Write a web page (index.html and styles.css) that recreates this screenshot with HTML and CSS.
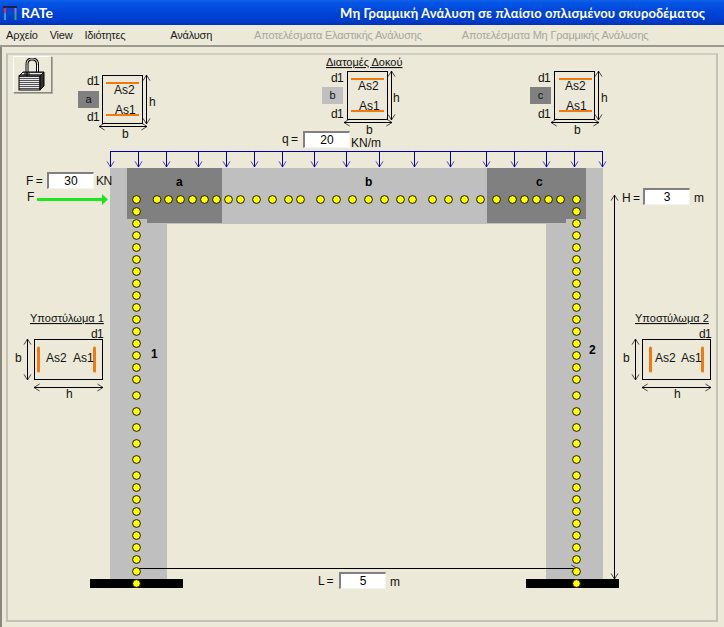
FILE: index.html
```html
<!DOCTYPE html>
<html lang="el">
<head>
<meta charset="utf-8">
<title>RATe</title>
<link rel="stylesheet" href="styles.css">
</head>
<body>
<div class="window">
  <header class="titlebar">
    <svg class="app-icon" width="16" height="16" viewBox="0 0 16 16">
      <path d="M1 2H15" stroke="#20204a" stroke-width="2"/>
      <path d="M3 3V8" stroke="#d33" stroke-width="2"/>
      <path d="M3 8V15" stroke="#2ab" stroke-width="2"/>
      <path d="M13.500 3V8" stroke="#b6a" stroke-width="2"/>
      <path d="M13.500 8V15" stroke="#3a6" stroke-width="2"/>
    </svg>
    <span class="app-name">RATe</span>
    <span class="app-title">Μη Γραμμική Ανάλυση σε πλαίσιο οπλισμένου σκυροδέματος</span>
  </header>
  <nav class="menubar">
    <span class="menu">Αρχείο</span>
    <span class="menu m2">View</span>
    <span class="menu m3">Ιδιότητες</span>
    <span class="menu m4">Ανάλυση</span>
    <span class="menu off m5">Αποτελέσματα Ελαστικής Ανάλυσης</span>
    <span class="menu off m6">Αποτελέσματα Μη Γραμμικής Ανάλυσης</span>
  </nav>
  <main class="client">
    <div class="panel"></div>
    <div class="stage">
    <svg class="drawing" width="724" height="627" viewBox="0 0 724 627">
      <defs>
        <marker id="ah" viewBox="0 0 10 10" refX="9" refY="5" markerWidth="7" markerHeight="10" orient="auto-start-reverse" markerUnits="userSpaceOnUse">
          <path d="M1 0L9 5L1 10" fill="none" stroke="#000" stroke-width="1"/>
        </marker>
        <marker id="ab" viewBox="0 0 10 10" refX="9" refY="5" markerWidth="7" markerHeight="11" orient="auto" markerUnits="userSpaceOnUse">
          <path d="M1 0L9 5L1 10" fill="none" stroke="#0000b0" stroke-width="1"/>
        </marker>
      </defs>

      <!-- frame -->
      <path class="concrete" d="M110 168H603V579H546V224H167V579H110Z"/>
      <path class="dark" d="M127 168H222V223H147V219H127Z"/>
      <path class="dark" d="M487 168H586V219H566V223H487Z"/>
      <rect x="90" y="579" width="93" height="9"/>
      <rect x="526" y="579" width="93" height="9"/>

      <!-- distributed load -->
      <path class="load" d="M110.500 151.500H602.500"/>
      <g class="load">
        <path marker-end="url(#ab)" d="M110.500 151V167"/>
        <path marker-end="url(#ab)" d="M138.500 151V167"/>
        <path marker-end="url(#ab)" d="M166.500 151V167"/>
        <path marker-end="url(#ab)" d="M198.500 151V167"/>
        <path marker-end="url(#ab)" d="M226.500 151V167"/>
        <path marker-end="url(#ab)" d="M254.500 151V167"/>
        <path marker-end="url(#ab)" d="M282.500 151V167"/>
        <path marker-end="url(#ab)" d="M314.500 151V167"/>
        <path marker-end="url(#ab)" d="M346.500 151V167"/>
        <path marker-end="url(#ab)" d="M379.500 151V167"/>
        <path marker-end="url(#ab)" d="M414.500 151V167"/>
        <path marker-end="url(#ab)" d="M450.500 151V167"/>
        <path marker-end="url(#ab)" d="M486.500 151V167"/>
        <path marker-end="url(#ab)" d="M514.500 151V167"/>
        <path marker-end="url(#ab)" d="M546.500 151V167"/>
        <path marker-end="url(#ab)" d="M574.500 151V167"/>
        <path marker-end="url(#ab)" d="M602.500 151V167"/>
      </g>

      <!-- force -->
      <path class="force" d="M37 199.500H104"/>
      <path class="force-head" d="M102 194L108 199.500L102 205Z"/>

      <!-- dimension lines -->
      <path class="dim" marker-end="url(#ah)" d="M136 568.500H577"/>
      <path class="dim" marker-start="url(#ah)" marker-end="url(#ah)" d="M614.500 195V579"/>

      <!-- section a -->
      <rect class="tag-dark" x="78" y="91" width="21" height="17"/>
      <rect class="sec" x="102.500" y="75.500" width="40" height="48"/>
      <path class="bar" d="M106 83H139M106 115H139"/>
      <path class="dim" marker-start="url(#ah)" marker-end="url(#ah)" d="M146.500 75V124"/>
      <path class="dim" marker-start="url(#ah)" marker-end="url(#ah)" d="M99 126.500H147"/>

      <!-- section b -->
      <rect class="tag-light" x="322" y="87" width="21" height="17"/>
      <rect class="sec" x="347.500" y="71.500" width="40" height="48"/>
      <path class="bar" d="M351 79H384M351 111H384"/>
      <path class="dim" marker-start="url(#ah)" marker-end="url(#ah)" d="M391.500 71V120"/>
      <path class="dim" marker-start="url(#ah)" marker-end="url(#ah)" d="M344 122.500H392"/>

      <!-- section c -->
      <rect class="tag-dark" x="530" y="87" width="21" height="17"/>
      <rect class="sec" x="554.500" y="71.500" width="40" height="48"/>
      <path class="bar" d="M559 79H592M559 111H592"/>
      <path class="dim" marker-start="url(#ah)" marker-end="url(#ah)" d="M598.500 71V120"/>
      <path class="dim" marker-start="url(#ah)" marker-end="url(#ah)" d="M551 122.500H599"/>

      <!-- column 1 section -->
      <rect class="sec" x="34.500" y="339.500" width="68" height="40"/>
      <path class="bar-col" d="M38.500 348V371M94.500 348V371"/>
      <path class="dim" marker-start="url(#ah)" marker-end="url(#ah)" d="M27.500 339V380"/>
      <path class="dim" marker-start="url(#ah)" marker-end="url(#ah)" d="M34 387.500H103"/>

      <!-- column 2 section -->
      <rect class="sec" x="642.500" y="339.500" width="68" height="40"/>
      <path class="bar-col" d="M650.500 348V371M702.500 348V371"/>
      <path class="dim" marker-start="url(#ah)" marker-end="url(#ah)" d="M635.500 339V380"/>
      <path class="dim" marker-start="url(#ah)" marker-end="url(#ah)" d="M642 387.500H711"/>

      <!-- reinforcement dots -->
      <g class="dots">
        <circle cx="136.500" cy="199.500" r="3.900"/><circle cx="157" cy="199.500" r="3.900"/><circle cx="168.500" cy="199.500" r="3.900"/><circle cx="180.500" cy="199.500" r="3.900"/><circle cx="192.500" cy="199.500" r="3.900"/><circle cx="204.500" cy="199.500" r="3.900"/><circle cx="216.500" cy="199.500" r="3.900"/><circle cx="228.500" cy="199.500" r="3.900"/><circle cx="240.500" cy="199.500" r="3.900"/><circle cx="256.500" cy="199.500" r="3.900"/><circle cx="272.500" cy="199.500" r="3.900"/><circle cx="288.500" cy="199.500" r="3.900"/><circle cx="300.500" cy="199.500" r="3.900"/><circle cx="320.500" cy="199.500" r="3.900"/><circle cx="336.500" cy="199.500" r="3.900"/><circle cx="352.500" cy="199.500" r="3.900"/><circle cx="368.500" cy="199.500" r="3.900"/><circle cx="384.500" cy="199.500" r="3.900"/><circle cx="400.500" cy="199.500" r="3.900"/><circle cx="412.500" cy="199.500" r="3.900"/><circle cx="432.500" cy="199.500" r="3.900"/><circle cx="448.500" cy="199.500" r="3.900"/><circle cx="464.500" cy="199.500" r="3.900"/><circle cx="480.500" cy="199.500" r="3.900"/><circle cx="496.500" cy="199.500" r="3.900"/><circle cx="512.500" cy="199.500" r="3.900"/><circle cx="524.500" cy="199.500" r="3.900"/><circle cx="536.500" cy="199.500" r="3.900"/><circle cx="548.500" cy="199.500" r="3.900"/><circle cx="560.500" cy="199.500" r="3.900"/><circle cx="576.500" cy="199.500" r="3.900"/>
        <circle cx="136.500" cy="211.500" r="3.900"/><circle cx="136.500" cy="223.500" r="3.900"/><circle cx="136.500" cy="235.500" r="3.900"/><circle cx="136.500" cy="247.500" r="3.900"/><circle cx="136.500" cy="259.500" r="3.900"/><circle cx="136.500" cy="271.500" r="3.900"/><circle cx="136.500" cy="283.500" r="3.900"/><circle cx="136.500" cy="295.500" r="3.900"/><circle cx="136.500" cy="307.500" r="3.900"/><circle cx="136.500" cy="319.500" r="3.900"/><circle cx="136.500" cy="331.500" r="3.900"/><circle cx="136.500" cy="343.500" r="3.900"/><circle cx="136.500" cy="355.500" r="3.900"/><circle cx="136.500" cy="367.500" r="3.900"/><circle cx="136.500" cy="379.500" r="3.900"/><circle cx="136.500" cy="395.500" r="3.900"/><circle cx="136.500" cy="411.500" r="3.900"/><circle cx="136.500" cy="427.500" r="3.900"/><circle cx="136.500" cy="443.500" r="3.900"/><circle cx="136.500" cy="459.500" r="3.900"/><circle cx="136.500" cy="475.500" r="3.900"/><circle cx="136.500" cy="487.500" r="3.900"/><circle cx="136.500" cy="499.500" r="3.900"/><circle cx="136.500" cy="511.500" r="3.900"/><circle cx="136.500" cy="523.500" r="3.900"/><circle cx="136.500" cy="535.500" r="3.900"/><circle cx="136.500" cy="547.500" r="3.900"/><circle cx="136.500" cy="559.500" r="3.900"/><circle cx="136.500" cy="571.500" r="3.900"/>
        <circle cx="576.500" cy="211.500" r="3.900"/><circle cx="576.500" cy="223.500" r="3.900"/><circle cx="576.500" cy="235.500" r="3.900"/><circle cx="576.500" cy="247.500" r="3.900"/><circle cx="576.500" cy="259.500" r="3.900"/><circle cx="576.500" cy="271.500" r="3.900"/><circle cx="576.500" cy="283.500" r="3.900"/><circle cx="576.500" cy="295.500" r="3.900"/><circle cx="576.500" cy="307.500" r="3.900"/><circle cx="576.500" cy="319.500" r="3.900"/><circle cx="576.500" cy="331.500" r="3.900"/><circle cx="576.500" cy="343.500" r="3.900"/><circle cx="576.500" cy="355.500" r="3.900"/><circle cx="576.500" cy="367.500" r="3.900"/><circle cx="576.500" cy="379.500" r="3.900"/><circle cx="576.500" cy="395.500" r="3.900"/><circle cx="576.500" cy="411.500" r="3.900"/><circle cx="576.500" cy="427.500" r="3.900"/><circle cx="576.500" cy="443.500" r="3.900"/><circle cx="576.500" cy="459.500" r="3.900"/><circle cx="576.500" cy="475.500" r="3.900"/><circle cx="576.500" cy="487.500" r="3.900"/><circle cx="576.500" cy="499.500" r="3.900"/><circle cx="576.500" cy="511.500" r="3.900"/><circle cx="576.500" cy="523.500" r="3.900"/><circle cx="576.500" cy="535.500" r="3.900"/><circle cx="576.500" cy="547.500" r="3.900"/><circle cx="576.500" cy="559.500" r="3.900"/><circle cx="576.500" cy="571.500" r="3.900"/>
        <circle cx="136.500" cy="583.500" r="3.900"/><circle cx="576.500" cy="583.500" r="3.900"/>
      </g>

      <!-- labels -->
      <g class="labels">
        <text class="heading" x="326" y="66">Διατομές Δοκού</text>
        <text class="heading" x="30" y="322">Υποστύλωμα 1</text>
        <text class="heading" x="635" y="322">Υποστύλωμα 2</text>

        <text class="small" x="88.500" y="103">a</text>
        <text class="small" x="332.500" y="99">b</text>
        <text class="small" x="540.500" y="99">c</text>

        <text class="tight" x="87" y="85">d1</text>
        <text class="tight" x="87" y="121">d1</text>
        <text x="114" y="94">As2</text>
        <text x="115" y="114">As1</text>
        <text x="149" y="106">h</text>
        <text x="122" y="138">b</text>

        <text class="tight" x="331" y="82">d1</text>
        <text class="tight" x="331" y="118">d1</text>
        <text x="358" y="90">As2</text>
        <text x="359" y="110">As1</text>
        <text x="393" y="102">h</text>
        <text x="366" y="134">b</text>

        <text class="tight" x="538" y="82">d1</text>
        <text class="tight" x="538" y="118">d1</text>
        <text x="565" y="90">As2</text>
        <text x="566" y="110">As1</text>
        <text x="601" y="102">h</text>
        <text x="574" y="134">b</text>

        <text class="tight" x="91" y="338">d1</text>
        <text x="46" y="362">As2</text>
        <text x="73" y="362">As1</text>
        <text x="15" y="362">b</text>
        <text x="66" y="398">h</text>

        <text class="tight" x="699" y="338">d1</text>
        <text x="655" y="362">As2</text>
        <text x="681" y="362">As1</text>
        <text x="623" y="362">b</text>
        <text x="674" y="398">h</text>

        <text class="eq" x="282" y="143">q =</text>
        <text x="351" y="147">KN/m</text>
        <text class="eq" x="26" y="185">F =</text>
        <text class="tight" x="96" y="185">KN</text>
        <text x="27" y="201">F</text>
        <text class="eq" x="622" y="202">H =</text>
        <text x="694" y="202">m</text>
        <text class="eq" x="318" y="585">L =</text>
        <text x="390" y="586">m</text>

        <text class="mark" x="176" y="186">a</text>
        <text class="mark" x="365" y="186">b</text>
        <text class="mark" x="536" y="186">c</text>
        <text class="mark" x="151" y="358">1</text>
        <text class="mark" x="589" y="354">2</text>
      </g>
    </svg>

    <button class="lock" type="button" aria-label="lock">
      <svg width="28" height="33" viewBox="0 0 28 33">
        <defs>
          <pattern id="mesh" width="2" height="2" patternUnits="userSpaceOnUse">
            <rect width="2" height="2" fill="#e8e8e8"/>
            <rect width="2" height="1" fill="#555"/>
          </pattern>
        </defs>
        <path d="M9 15V6.500C9 2.500 10.500 1 14 1S19.500 2.500 19.500 6.500V15" fill="none" stroke="#000" stroke-width="3"/>
        <path d="M9 15V6.500C9 2.500 10.500 1 14 1S19.500 2.500 19.500 6.500V15" fill="none" stroke="#fff" stroke-width="1"/>
        <path d="M1 18L5 14H26L22 18Z" fill="url(#mesh)" stroke="#000"/>
        <rect x="1" y="18" width="21" height="14" fill="url(#mesh)" stroke="#000"/>
        <path d="M22 18L26 14V28L22 32Z" fill="#333" stroke="#000"/>
        <path d="M6 16H12M9 14V18" stroke="#000"/>
      </svg>
    </button>

    <span class="field f-q">20</span>
    <span class="field f-f">30</span>
    <span class="field f-h">3</span>
    <span class="field f-l">5</span>
    </div>
  </main>
</div>
</body>
</html>
```

FILE: styles.css
```css
* { box-sizing: border-box; }
html, body { margin: 0; padding: 0; background: #ece9d8; }
body { font-family: "Liberation Sans", Arial, sans-serif; color: #000; overflow: hidden; }
.window { width: 724px; height: 627px; display: flex; flex-direction: column; background: #ece9d8; }

.titlebar {
  height: 25px; flex: none; display: flex; align-items: center; padding: 0 19px 0 2px;
  background: linear-gradient(180deg, #0f62e8 0, #0454e4 3px, #0045d8 12px, #003ccc 20px, #0034b4 25px);
  color: #fff;
}
.app-icon { flex: none; margin-right: 3px; }
.app-name { font: bold 14px Lato, sans-serif; }
.app-title { margin-left: auto; font: bold 13px Lato, sans-serif; letter-spacing: 0.09px; white-space: nowrap; }

.menubar {
  height: 22px; flex: none; display: flex; align-items: center; font-size: 11px;
  letter-spacing: -0.2px; border-bottom: 2px solid #9c9a8e;
  padding: 0 0 1px 6px; color: #1a1a1a;
}
.menu { white-space: nowrap; }
.m2, .m3 { margin-left: 12px; }
.m4 { margin-left: 45px; }
.m5 { margin-left: 42px; }
.m6 { margin-left: 40px; }
.off { color: #a8a69c; }

.client { position: relative; flex: 1; border-left: 2px solid #8a887c; }
.panel { position: absolute; left: 4px; top: 6px; width: 712px; height: 569px; border: 2px solid #c4c2b6; border-top-color: #cfcdc0; }
.stage { position: absolute; left: -2px; top: -47px; width: 724px; height: 627px; }
.drawing { display: block; }

.concrete, .tag-light { fill: #bfbfbf; }
.dark, .tag-dark { fill: #808080; }
.load { fill: none; stroke: #0000b0; stroke-width: 1; }
.force { stroke: #1ee61e; stroke-width: 3; fill: none; }
.force-head { fill: #1ee61e; }
.dim { stroke: #000; stroke-width: 1; fill: none; }
.sec { fill: none; stroke: #000; stroke-width: 1; }
.bar { stroke: #f07a10; stroke-width: 2; fill: none; }
.bar-col { stroke: #f07a10; stroke-width: 3; fill: none; stroke-linecap: round; }
.dots circle { fill: #ffff00; stroke: #000; stroke-width: 0.9; }

.labels text { font-size: 12px; fill: #111; }
.labels .heading { font-size: 11px; text-decoration: underline; }
.labels .small { font-size: 11px; text-anchor: middle; }
.labels .tight { letter-spacing: -0.6px; }
.labels .eq { word-spacing: -1px; }
.labels .mark { font-weight: bold; fill: #000; }

.lock {
  position: absolute; left: 13px; top: 56px; width: 39px; height: 37px; padding: 0 4px 0 2px;
  display: flex; align-items: center; justify-content: center;
  background: #ece9d8; border: 1px solid; border-color: #fff #8a887c #8a887c #fff;
  box-shadow: 1px 1px 0 #b0aea2;
}

.field {
  position: absolute; width: 47px; height: 17px;
  background: #fff; font-size: 12px; line-height: 14px; text-align: center;
  border: 1px solid; border-color: #808080 #f4f3ec #f4f3ec #808080;
  border-top-width: 2px; border-left-width: 2px;
}
.f-q { left: 303px; top: 131px; }
.f-f { left: 47px; top: 172px; }
.f-h { left: 643px; top: 188px; }
.f-l { left: 339px; top: 572px; }
```
